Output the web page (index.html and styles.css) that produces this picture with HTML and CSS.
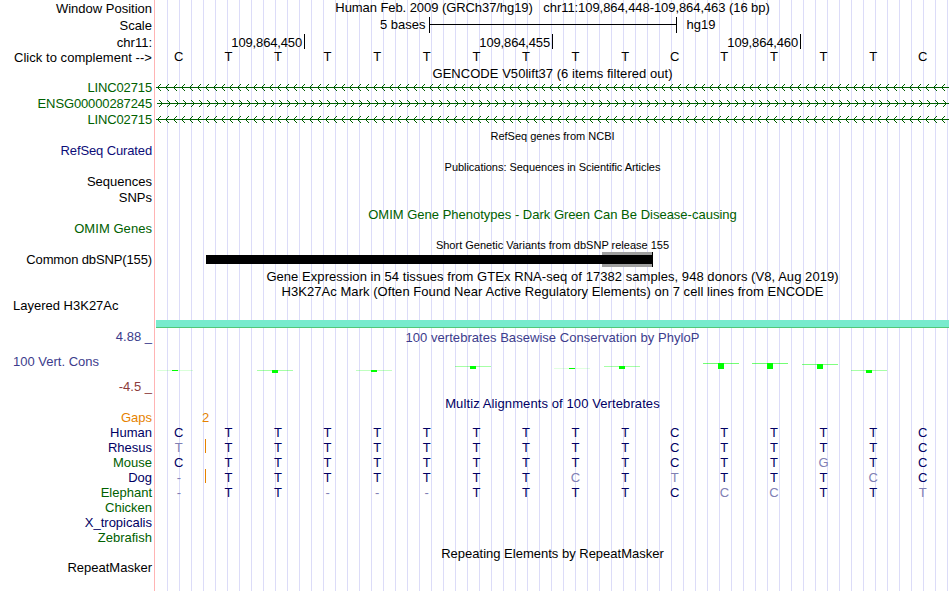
FILE: index.html
```
<!DOCTYPE html>
<html lang="en">
  <head>
    <meta charset="UTF-8" />
    <title>UCSC Genome Browser</title>
    <link rel="stylesheet" href="styles.css">
  </head>
  <body>
    <div class="browser">
      <div class="labels">
        <div class="h17">Window Position</div>
        <div class="h17">Scale</div>
        <div class="h17">chr11:</div>
        <div class="h13 loose">Click to complement --&gt;</div>
        <div class="h16 gap16 green tight">LINC02715</div>
        <div class="h16 green tight">ENSG00000287245</div>
        <div class="h16 green tight">LINC02715</div>
        <div class="h16 gap15 navy tight">RefSeq Curated</div>
        <div class="h16 gap15">Sequences</div>
        <div class="h16">SNPs</div>
        <div class="h16 gap15 green loose">OMIM Genes</div>
        <div class="h16 gap15 tight">Common dbSNP(155)</div>
        <div class="h16 gap30 wide">Layered H3K27Ac</div>
        <div class="h16 gap15 phylop">4.88 _</div>
        <div class="h16 gap9 phylop wide">100 Vert. Cons</div>
        <div class="h16 gap9 low">-4.5 _</div>
        <div class="h15 gap15 orange">Gaps</div>
        <div class="h15 blue">Human</div>
        <div class="h15 blue">Rhesus</div>
        <div class="h15 green">Mouse</div>
        <div class="h15 blue">Dog</div>
        <div class="h15 green">Elephant</div>
        <div class="h15 green">Chicken</div>
        <div class="h15 blue">X_tropicalis</div>
        <div class="h15 green">Zebrafish</div>
        <div class="h15 gap15">RepeatMasker</div>
      </div>
      <div class="tracks">
        <div class="title assembly">Human Feb. 2009 (GRCh37/hg19) &nbsp; chr11:109,864,448-109,864,463 (16 bp)</div>
        <div class="scale"><span>5 bases</span><i class="ruler"></i><span>hg19</span></div>
        <div class="positions"><span>109,864,450</span><span>109,864,455</span><span>109,864,460</span></div>
        <div class="bases reference" data-seq="CTTTTTTTTTCTTTTC"></div>
        <div class="title gencode">GENCODE V50lift37 (6 items filtered out)</div>
        <svg class="gene" width="793" height="16">
          <defs>
            <pattern id="minus" x="1" width="8" height="16" patternUnits="userSpaceOnUse">
              <path d="M3 2h1v1h-1zM2 3h1v1h-1zM1 4h1v1h-1zM1 6h1v1h-1zM2 7h1v1h-1zM3 8h1v1h-1z" />
            </pattern>
            <pattern id="plus" x="1" width="8" height="16" patternUnits="userSpaceOnUse">
              <path d="M2 2h1v1h-1zM3 3h1v1h-1zM4 4h1v1h-1zM4 6h1v1h-1zM3 7h1v1h-1zM2 8h1v1h-1z" />
            </pattern>
          </defs>
          <rect width="793" height="16" fill="url(#minus)" />
          <rect y="5" width="793" height="1" />
        </svg>
        <svg class="gene" width="793" height="16">
          <rect width="793" height="16" fill="url(#plus)" />
          <rect x="1" y="5" width="792" height="1" />
        </svg>
        <svg class="gene" width="793" height="16">
          <rect width="793" height="16" fill="url(#minus)" />
          <rect y="5" width="793" height="1" />
        </svg>
        <div class="title small refseq">RefSeq genes from NCBI</div>
        <div class="title small pubs">Publications: Sequences in Scientific Articles</div>
        <div class="title omim green">OMIM Gene Phenotypes - Dark Green Can Be Disease-causing</div>
        <div class="title small dbsnp">Short Genetic Variants from dbSNP release 155</div>
        <svg class="variant" width="793" height="15">
          <rect x="446" width="51" height="15" fill="#a0a0a0" />
          <rect x="50" y="3" width="447" height="9" />
          <rect x="496" width="1" height="15" />
        </svg>
        <div class="title gtex">Gene Expression in 54 tissues from GTEx RNA-seq of 17382 samples, 948 donors (V8, Aug 2019)</div>
        <div class="title h3k">H3K27Ac Mark (Often Found Near Active Regulatory Elements) on 7 cell lines from ENCODE</div>
        <div class="signal"></div>
        <div class="title phylop cons">100 vertebrates Basewise Conservation by PhyloP</div>
        <svg class="wiggle" id="wiggle" width="793" height="50" shape-rendering="crispEdges"></svg>
        <div class="title blue multiz">Multiz Alignments of 100 Vertebrates</div>
        <div class="gaps orange">2</div>
        <div class="bases blue" data-seq="CTTTTTTTTTCTTTTC"></div>
        <div class="bases blue insert" data-seq="tTTTTTTTTTCTTTTC"></div>
        <div class="bases blue" data-seq="CTTTTTTTTTCTTgTC"></div>
        <div class="bases blue insert" data-seq="-TTTTTTTcTtTTTcC"></div>
        <div class="bases blue" data-seq="-TT---TTTTCccTTt"></div>
        <div class="title repeats">Repeating Elements by RepeatMasker</div>
      </div>
    </div>
    <script src="tracks.js"></script>
  </body>
</html>
```
FILE: styles.css
```
body {
  margin: 0;
  background: white;
  color: black;
  font-family: "Liberation Sans", Arial, sans-serif;
  font-size: 13px;
}
.browser {
  display: flex;
  width: 949px;
  height: 591px;
  overflow: hidden;
}
.labels {
  box-sizing: border-box;
  width: 154px;
  padding-right: 2px;
  text-align: right;
  white-space: nowrap;
}
.tracks {
  width: 793px;
  padding-left: 1px;
  border-left: 1px solid #ffb4b4;
  /* one guideline every 12 pixels */
  background: repeating-linear-gradient(to right, transparent 0 11px, #dcdcf8 11px 12px) 1px 0;
}
.h13 { height: 13px; line-height: 13px; }
.h15 { height: 15px; line-height: 15px; }
.h16 { height: 16px; line-height: 16px; }
.h17 { height: 17px; line-height: 17px; }
.gap9 { margin-top: 9px; }
.gap15 { margin-top: 15px; }
.gap16 { margin-top: 16px; }
.gap30 { margin-top: 30px; }
.wide { text-align: left; padding-left: 13px; }
.loose { letter-spacing: 0.05px; }
.tight { letter-spacing: -0.13px; }

.green { color: #006000; }
.navy { color: #0c0c78; }
.blue { color: #000064; }
.phylop { color: #3c3c8c; }
.low { color: #8c3c3c; }
.orange { color: #e68200; }

.title {
  height: 16px;
  line-height: 16px;
  text-align: center;
  white-space: nowrap;
}
.small { font-size: 11px; }
.assembly { letter-spacing: -0.07px; }
.scale {
  display: flex;
  height: 17px;
  line-height: 17px;
  padding-left: 224px;
}
.ruler {
  box-sizing: border-box;
  width: 248px;
  height: 16px;
  margin: 1px 10px 0 3px;
  border: solid black;
  border-width: 0 1px;
  background: linear-gradient(black, black) 0 7px / 100% 1px no-repeat;
}
.positions {
  display: flex;
  height: 17px;
}
.positions span {
  box-sizing: border-box;
  width: 248px;
  height: 15px;
  margin-top: 1px;
  padding-right: 2px;
  line-height: 17px;
  letter-spacing: -0.15px;
  text-align: right;
  border-right: 1px solid black;
}
.positions span:first-child { width: 149px; }
.bases {
  display: grid;
  grid-template-columns: repeat(16, 49.6px);
  position: relative;
  left: -2px;
  height: 15px;
  line-height: 15px;
  text-align: center;
}
.reference { margin-top: -1px; }
.mismatch { color: #8080b4; }
.insert::before {
  content: "";
  position: absolute;
  left: 51px;
  top: -1px;
  width: 1px;
  height: 14px;
  background: #e68200;
}
.gencode { margin-top: 2px; letter-spacing: 0.04px; }
.gene { display: block; fill: #006000; }
.refseq { margin-top: -2px; }
.pubs { margin-top: 15px; letter-spacing: -0.04px; }
.omim { margin-top: 32px; }
.dbsnp { margin-top: 14px; height: 15px; }
.variant { display: block; }
.gtex { margin-top: 2px; height: 15px; letter-spacing: 0.055px; }
.h3k { letter-spacing: 0.05px; }
.signal {
  height: 7px;
  margin-top: 20px;
  background: #78ebcd;
  border-bottom: 1px solid #50c878;
}
.cons { margin-top: 2px; letter-spacing: 0.04px; }
.wiggle { display: block; fill: #00ff00; }
.multiz { height: 14px; letter-spacing: 0.1px; }
.gaps {
  height: 15px;
  line-height: 15px;
  padding-left: 46px;
}
.repeats { margin-top: 46px; }
```
FILE: tracks.js
```
// lower case letters are bases that differ from the human sequence
document.querySelectorAll(".bases").forEach(function (row) {
  for (const base of row.dataset.seq) {
    const cell = document.createElement("span");
    cell.textContent = base.toUpperCase();
    if (base !== base.toUpperCase() || base === "-") cell.className = "mismatch";
    row.appendChild(cell);
  }
});

// left edge, top, height and opacity of the line
const scores = [
  [1, 24, 1, 0.15], [101, 24, 3, 0.35], [200, 24, 2, 0.25], [299, 20, 3, 0.35], [398, 22, 1, 0.12],
  [448, 20, 3, 0.35], [547, 17, 6, 0.55], [596, 17, 6, 0.55], [646, 18, 5, 0.5], [695, 24, 3, 0.35]
];
document.getElementById("wiggle").innerHTML = scores.map(function (s) {
  return `<rect x="${s[0]}" y="${s[1]}" width="36" height="1" opacity="${s[3]}" />` +
    `<rect x="${s[0] + 15}" y="${s[1]}" width="6" height="${s[2]}" />`;
}).join("");
```
